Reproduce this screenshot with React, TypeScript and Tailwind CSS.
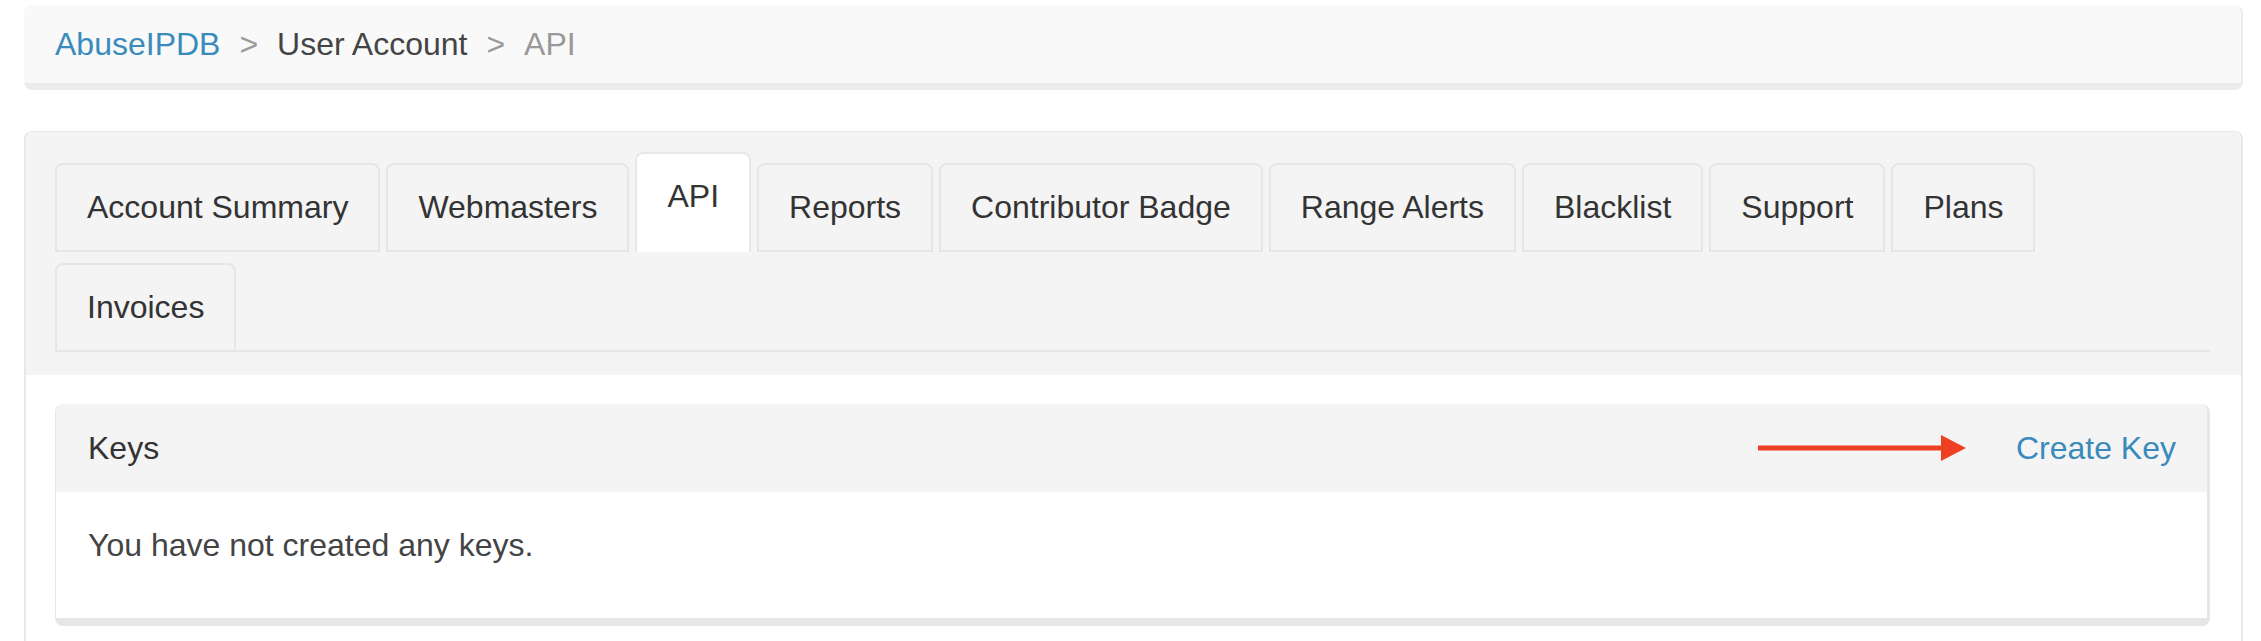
import React from 'react'

const tabs = [
  'Account Summary',
  'Webmasters',
  'API',
  'Reports',
  'Contributor Badge',
  'Range Alerts',
  'Blacklist',
  'Support',
  'Plans',
  'Invoices',
]

function Arrow() {
  return (
    <svg width="208" height="26" viewBox="0 0 208 26" className="block">
      <rect x="0" y="10.5" width="186" height="5" fill="#ee4124" />
      <polygon points="183,0 208,13 183,26" fill="#ee4124" />
    </svg>
  )
}

export default function App() {
  return (
    <div
      className="min-h-screen bg-white pt-[5px] pl-[24px] pr-[18px] text-[32px] leading-[46px] text-[#333]"
      style={{ fontFamily: '"Liberation Sans", Arial, Helvetica, sans-serif' }}
    >
      {/* Breadcrumb */}
      <nav className="flex items-center rounded-[8px] border-b-[7px] border-r-[2px] border-[#ececec] bg-[#f9f9f9] px-[31px] py-[16px]">
        <a href="#" className="text-[#3a8bbb]">AbuseIPDB</a>
        <span className="mx-[19px] text-[#9a9a9a]">&gt;</span>
        <span className="text-[#444]">User Account</span>
        <span className="mx-[19px] text-[#9a9a9a]">&gt;</span>
        <span className="text-[#999]">API</span>
      </nav>

      {/* Account panel */}
      <section className="mt-[41px] rounded-t-[8px] border-x-[2px] border-t-[1px] border-[#e8e8e8]">
        <div className="rounded-t-[8px] bg-[#f4f4f4] pl-[29px] pr-[31px] pt-[20px] pb-[23px]">
          <ul className="flex flex-wrap items-end gap-x-[6px] gap-y-[13px] border-b-[2px] border-[#e6e6e6] leading-[45px]">
            {tabs.map(t =>
              t === 'API' ? (
                <li
                  key={t}
                  className="-mb-[2px] rounded-t-[8px] border-x-[2px] border-t-[2px] border-[#e8e8e8] bg-white px-[30px] pt-[20px] pb-[33px]"
                >
                  {t}
                </li>
              ) : (
                <li
                  key={t}
                  className="-mb-[2px] rounded-t-[8px] border-[2px] border-[#e6e6e6] bg-[#f4f4f4] px-[30px] py-[20px]"
                >
                  {t}
                </li>
              )
            )}
          </ul>
        </div>

        <div className="bg-white pl-[29px] pr-[31px] pt-[29px] pb-[30px]">
          {/* Keys box */}
          <div className="overflow-hidden rounded-[8px] border-l-[1px] border-r-[3px] border-b-[8px] border-[#e6e6e6]">
            <div className="flex h-[88px] items-center justify-between bg-[#f4f4f4] pl-[32px] pr-[31px]">
              <span>Keys</span>
              <div className="flex items-center gap-[50px]">
                <Arrow />
                <a href="#" className="text-[#3a8bbb]">Create Key</a>
              </div>
            </div>
            <div className="bg-white px-[32px] pt-[30px] pb-[50px] text-[#444]">
              You have not created any keys.
            </div>
          </div>
        </div>
      </section>
    </div>
  )
}
